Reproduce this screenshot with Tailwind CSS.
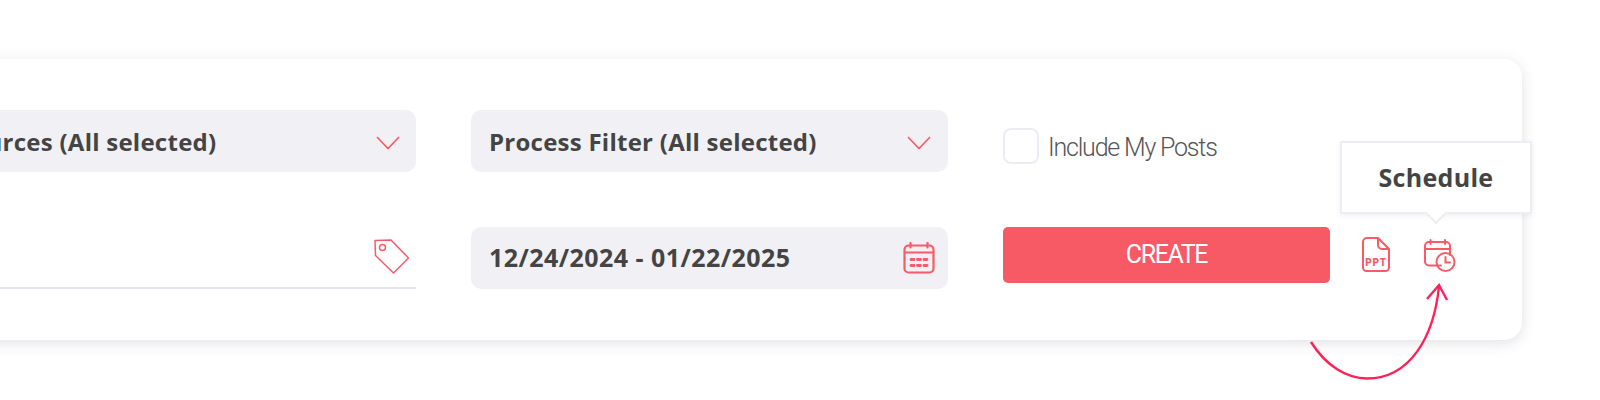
<!DOCTYPE html>
<html lang="en">
<head>
  <meta charset="UTF-8">
  <title>Create report</title>
  <script src="https://cdn.jsdelivr.net/npm/@tailwindcss/browser@4"></script>
</head>
<body class="bg-white">
  <div class="w-[1600px] h-[400px] overflow-hidden pt-[59px]">
    <!-- Filter card, runs off the left edge -->
    <div class="relative ml-[-40px] w-[1562px] h-[281px] bg-white rounded-[18px] shadow-[0_3px_14px_rgba(60,70,100,0.16)] pt-[51px] pl-[20px]">
      <div class="grid grid-cols-[436px_477px_519px] gap-x-[55px] gap-y-[55px] grid-rows-[62px_62px]">
        <!-- Sources -->
        <div class="bg-[#f1f1f5] rounded-[10px] flex items-center justify-between pr-[16px] whitespace-nowrap">
          <span class="ml-[-22px] font-['Open_Sans',sans-serif] font-bold text-[24px] tracking-[0.25px] text-[#444444] pt-[1px]">Sources (All selected)</span>
          <svg class="w-[24px] h-[14px] mt-[3px]" viewBox="0 0 24 14" fill="none" stroke="#f95a66" stroke-width="1.6"><path d="M1 1l11 11.5L23 1"/></svg>
        </div>
        <!-- Process -->
        <div class="bg-[#f1f1f5] rounded-[10px] flex items-center justify-between pl-[18px] pr-[17px] whitespace-nowrap">
          <span class="font-['Open_Sans',sans-serif] font-bold text-[24px] tracking-[0.25px] text-[#444444] pt-[1px]">Process Filter (All selected)</span>
          <svg class="w-[24px] h-[14px] mt-[3px]" viewBox="0 0 24 14" fill="none" stroke="#f95a66" stroke-width="1.6"><path d="M1 1l11 11.5L23 1"/></svg>
        </div>
        <!-- Include my posts -->
        <div class="flex items-center gap-[9px] pt-[13px]">
          <span class="w-[36px] h-[36px] mb-[3px] rounded-[8px] border-2 border-[#ececf4] bg-white"></span>
          <span class="font-['Roboto',sans-serif] font-light text-[25px] tracking-[-1.2px] text-[#555555] whitespace-nowrap">Include My Posts</span>
        </div>
        <!-- Tags -->
        <div class="border-b-2 border-[#e6e6ee] flex items-center justify-end pr-[7px] pb-[2px]">
          <svg class="w-[36px] h-[36px]" viewBox="0 0 36 36" fill="none" stroke="#f95a66" stroke-width="1.5" stroke-linejoin="round"><path d="M2 2.500l16-.5 17.500 18-15 15L2.500 17.500z"/><circle cx="9.500" cy="9.500" r="3"/></svg>
        </div>
        <!-- Date range -->
        <div class="bg-[#f1f1f5] rounded-[10px] flex items-center justify-between pl-[18px] pr-[13px] whitespace-nowrap">
          <span class="font-['Open_Sans',sans-serif] font-bold text-[25px] tracking-[0.45px] text-[#444444]">12/24/2024 - 01/22/2025</span>
          <svg class="w-[32px] h-[32px] mb-[1px]" viewBox="0 0 32 32" fill="none" stroke="#f95a66" stroke-width="2.200" stroke-linecap="round"><rect x="1.500" y="3.500" width="29" height="27" rx="4"/><path d="M2 10.500h28M7.500 1v4.500M24.500 1v4.500"/><path stroke-width="2.800" d="M8 17.500h3M14.500 17.500h3M21 17.500h3M8 23.500h3M14.500 23.500h3M21 23.500h3"/></svg>
        </div>
        <!-- Actions -->
        <div class="flex items-start">
          <button class="w-[327px] h-[56px] rounded-[5px] bg-[#f75a65] text-white font-['Roboto',sans-serif] font-normal text-[25px] tracking-[-1.4px]">CREATE</button>
          <div class="flex items-start ml-[32px] gap-[34px] pt-[10px]">
            <svg class="w-[28px] h-[35px]" viewBox="0 0 28 35" fill="none" stroke="#f95a66" stroke-width="2" stroke-linejoin="round"><path d="M5 1h11l11 11v18.500a3.500 3.500 0 0 1-3.500 3.500h-19A3.500 3.500 0 0 1 1 30.500V5a4 4 0 0 1 4-4z"/><path d="M16 1v7a4 4 0 0 0 4 4h7"/><text x="14" y="29" text-anchor="middle" fill="#f95a66" stroke="none" font-family="Roboto, sans-serif" font-weight="900" font-size="10" letter-spacing="0.800">PPT</text></svg>
            <div class="relative w-[32px] h-[34px]">
              <svg class="w-[32px] h-[34px] mt-[2px]" viewBox="0 0 32 34" fill="none" stroke="#f95a66" stroke-width="2" stroke-linecap="round"><path d="M17 26.500H5a4 4 0 0 1-4-4V7a4 4 0 0 1 4-4h17a4 4 0 0 1 4 4v9"/><path d="M1.500 10h24M6.500 1v4M21 1v4"/><circle cx="21.500" cy="23" r="9"/><path d="M21.500 18v5.500h4.500"/></svg>
              <!-- Tooltip -->
              <div class="absolute left-[-84px] top-[-96px] w-[192px] h-[73px] bg-white border-2 border-[#ecedf3] shadow-[0_2px_6px_rgba(60,70,100,0.08)] flex items-center justify-center font-['Open_Sans',sans-serif] font-bold text-[25px] tracking-[0.3px] text-[#444444]">
                Schedule
                <span class="absolute left-[86px] bottom-[-9px] w-[16px] h-[16px] rotate-45 bg-white border-r-2 border-b-2 border-[#ecedf3]"></span>
              </div>
            </div>
          </div>
        </div>
      </div>
      <!-- Annotation arrow -->
      <svg class="absolute left-[1340px] top-[220px] w-[150px] h-[110px] overflow-visible" viewBox="0 0 150 110" fill="none" stroke="#ff2056" stroke-width="2.400"><path d="M11 63C26 87 47 99.500 67 99.500C110 99.500 134 58 139 7"/><path d="M127 20L139 6L147 21"/></svg>
    </div>
  </div>
</body>
</html>
